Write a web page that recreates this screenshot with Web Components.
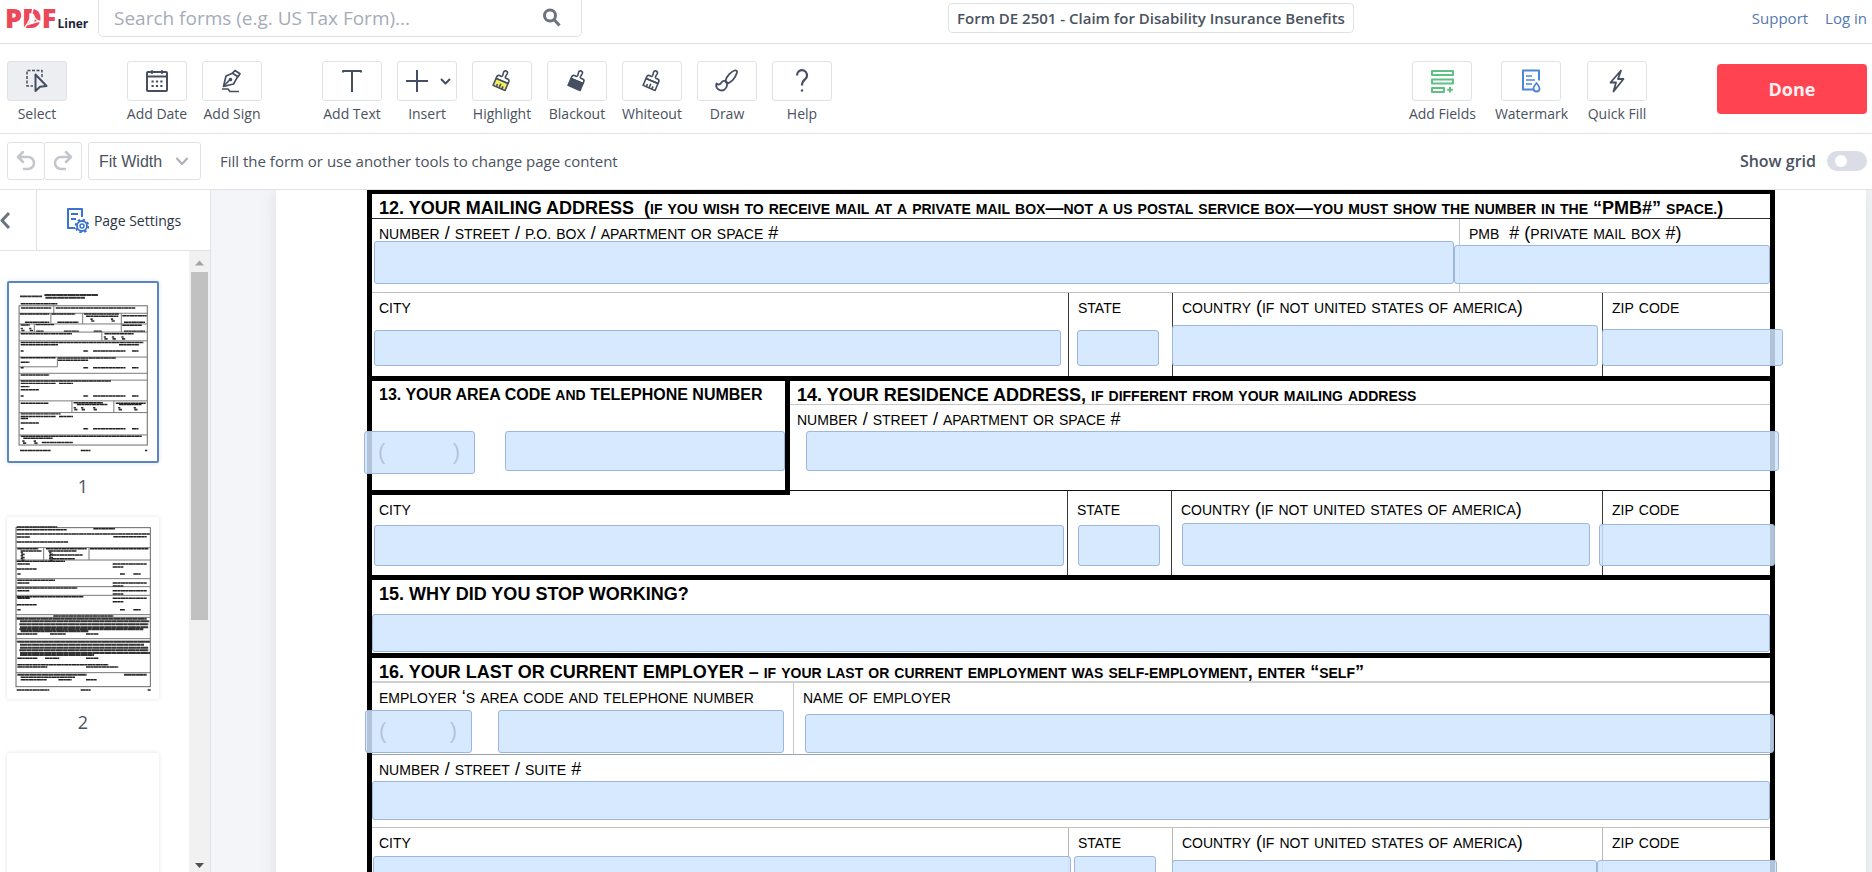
<!DOCTYPE html>
<html lang="en">
<head>
<meta charset="utf-8">
<title>Form DE 2501 - Claim for Disability Insurance Benefits</title>
<style>
    body {
        margin: 0;
        height: 100vh;
        overflow: hidden;
        display: flex;
        flex-direction: column;
        font-family: "Open Sans", "Noto Sans", sans-serif;
        font-size: 15px;
        color: #4a5260;
        background: #fff;
        --line: #dfe3e5;
        --blue: #5b87c0;
    }

    main {
        flex: 1;
        min-height: 0;
        display: flex;
    }
</style>
</head>
<body>
<app-header>Form DE 2501 - Claim for Disability Insurance Benefits</app-header>

<tool-bar>
    <tool-button icon="select" active>Select</tool-button>
    <tool-button icon="date" first>Add Date</tool-button>
    <tool-button icon="sign">Add Sign</tool-button>
    <tool-button icon="text" first>Add Text</tool-button>
    <tool-button icon="insert">Insert</tool-button>
    <tool-button icon="highlight">Highlight</tool-button>
    <tool-button icon="blackout">Blackout</tool-button>
    <tool-button icon="whiteout">Whiteout</tool-button>
    <tool-button icon="draw">Draw</tool-button>
    <tool-button icon="help">Help</tool-button>
    <tool-button slot="end" icon="fields" fit>Add Fields</tool-button>
    <tool-button slot="end" icon="watermark" fit>Watermark</tool-button>
    <tool-button slot="end" icon="quick" fit>Quick Fill</tool-button>
</tool-bar>

<option-bar>Fill the form or use another tools to change page content</option-bar>

<main>
    <side-panel>
        <page-thumb page="1" selected></page-thumb>
        <page-thumb page="2"></page-thumb>
        <page-thumb page="3"></page-thumb>
    </side-panel>

    <pdf-page>
        <form-row height="24" rule="#2e2e2e">
            <form-title>12. YOUR MAILING ADDRESS&nbsp; (<form-caps>IF YOU WISH TO RECEIVE MAIL AT A PRIVATE MAIL BOX—NOT A US POSTAL SERVICE BOX—YOU MUST SHOW THE NUMBER IN THE </form-caps>“PMB#”<form-caps> SPACE.)</form-caps></form-title>
        </form-row>
        <form-row columns="1087fr 311fr" height="73" rule="#c0c0c0" style="--divider: #c8c8c8; --bottom: 8px">
            <form-cell label="NUMBER / STREET / P.O. BOX / APARTMENT OR SPACE #" style="--field: 43px; --start: 2px; --end: 5px"></form-cell>
            <form-cell divided label="PMB&nbsp; # (PRIVATE MAIL BOX #)" style="--field: 39px; --start: -6px"></form-cell>
        </form-row>
        <form-row columns="696fr 104fr 430fr 168fr" height="83" rule="#000" thick style="--divider: #3a3a3a; --bottom: 10px">
            <form-cell label="CITY" style="--field: 36px; --start: 2px; --end: 7px"></form-cell>
            <form-cell divided label="STATE" style="--field: 36px; --start: 8px; --end: 13px"></form-cell>
            <form-cell divided label="COUNTRY (IF NOT UNITED STATES OF AMERICA)" style="--field: 41px; --start: -1px; --end: 4px"></form-cell>
            <form-cell divided label="ZIP CODE" style="--field: 37px; --start: -1px; --end: -13px"></form-cell>
        </form-row>

        <form-row columns="418fr 980fr" height="109" rule="#111">
            <phone-cell boxed style="--bottom: 16px; --code: 111px; --start: -8px; --gap: 30px">
                <form-title compact>13. YOUR AREA CODE <form-caps>AND</form-caps> TELEPHONE NUMBER</form-title>
            </phone-cell>
            <form-cell label="NUMBER / STREET / APARTMENT OR SPACE #" titled style="--field: 40px; --start: 16px; --end: -9px; --bottom: 19px">
                <form-title>14. YOUR RESIDENCE ADDRESS, <form-caps>IF DIFFERENT FROM YOUR MAILING ADDRESS</form-caps></form-title>
            </form-cell>
        </form-row>
        <form-row columns="695fr 104fr 431fr 168fr" height="84" rule="#000" thick style="--divider: #3a3a3a; --bottom: 9px; --top: 7px">
            <form-cell label="CITY" style="--field: 41px; --start: 2px; --end: 3px"></form-cell>
            <form-cell divided label="STATE" style="--field: 41px; --start: 10px; --end: 11px"></form-cell>
            <form-cell divided label="COUNTRY (IF NOT UNITED STATES OF AMERICA)" style="--field: 43px; --start: 10px; --end: 12px"></form-cell>
            <form-cell divided label="ZIP CODE" style="--field: 42px; --start: -4px; --end: -5px"></form-cell>
        </form-row>

        <form-row height="73" rule="#000" thick style="--bottom: 1px">
            <form-cell titled style="--field: 38px">
                <form-title>15. WHY DID YOU STOP WORKING?</form-title>
            </form-cell>
        </form-row>

        <form-row height="23" rule="#d0d0d0" double>
            <form-title>16. YOUR LAST OR CURRENT EMPLOYER – <form-caps>IF YOUR LAST OR CURRENT EMPLOYMENT WAS SELF-EMPLOYMENT, ENTER “SELF”</form-caps></form-title>
        </form-row>
        <form-row columns="421fr 977fr" height="71" rule="#9aa3ad" style="--divider: #c8c8c8; --bottom: 1px">
            <phone-cell label="EMPLOYER ‘S AREA CODE AND TELEPHONE NUMBER" style="--code: 107px; --start: -7px; --gap: 26px; --end: 9px"></phone-cell>
            <form-cell divided label="NAME OF EMPLOYER" style="--field: 39px; --start: 11px; --end: -4px"></form-cell>
        </form-row>
        <form-row height="72" rule="#c0c0c0" style="--bottom: 7px">
            <form-cell label="NUMBER / STREET / SUITE #" style="--field: 39px"></form-cell>
        </form-row>
        <form-row columns="696fr 104fr 430fr 168fr" height="84" rule="#000" thick style="--divider: #b8b8b8; --bottom: 15px">
            <form-cell label="CITY" style="--field: 41px; --start: 1px; --end: -3px"></form-cell>
            <form-cell divided label="STATE" style="--field: 41px; --start: 5px; --end: 16px"></form-cell>
            <form-cell divided label="COUNTRY (IF NOT UNITED STATES OF AMERICA)" style="--field: 37px; --start: -1px; --end: 5px"></form-cell>
            <form-cell divided label="ZIP CODE" style="--field: 37px; --start: -6px; --end: -7px"></form-cell>
        </form-row>
    </pdf-page>
</main>

<script>
const svg = (body, w = 24, h = 24) =>
    `<svg width="${w}" height="${h}" viewBox="0 0 ${w} ${h}" fill="none" stroke="#454f61" stroke-width="2" stroke-linejoin="round" aria-hidden="true">${body}</svg>`;

// paint brush, shared by Highlight, Blackout and Whiteout
const brush = (fill, ticks) => `
    <g transform="rotate(23 12 12)" stroke-width="1.6">
        <path d="M5.5 12V10a2 2 0 0 1 2-2h1.6q1.4 0 1.4-1.4L10 3.2a2 2 0 0 1 4 0L13.5 6.6q0 1.4 1.4 1.4h1.6a2 2 0 0 1 2 2v2z"/>
        <path d="M5.5 12h13v7.5h-13z" fill="${fill}"/>
        ${ticks ? `<path d="M9 19.5v-3M12 19.5v-4.5M15 19.5v-3"/>` : ""}
    </g>`;

const icons = {
    select: svg(`<path d="M17 8V1.5H2V17h6" stroke-width="1.5" stroke-dasharray="3 1.5"/><path d="M10.5 5.5v16.5l4.5-4.2 6.5-.8z" fill="#eceef1"/>`),
    date: svg(`<rect x="2" y="3" width="20" height="19" rx="1"/><path d="M2 7.5h20"/><path d="M7 1v4M17 1v4" stroke-width="1.5"/><path d="M6.5 12.5h11M6.5 17h11" stroke-width="2.2" stroke-dasharray="2.2 2.2"/>`),
    sign: svg(`<g stroke-width="1.7"><path d="M15 1.5l5 3.2-2 3-5.5-3.5z"/><path d="M12.5 4.2L6 7 3.5 17.5l10-2.5 4.2-7.3"/><path d="M3.5 17.5L10 10.5"/><circle cx="10.5" cy="10.5" r="1"/><path d="M2 20h6l2 2.5h9"/></g>`),
    text: svg(`<path d="M3 3.5V2h18v1.5M12 2v21"/>`),
    insert: svg(`<path d="M12 1v22M1 12h22"/><path d="M36 10l4.5 4.5L45 10"/>`, 48, 24),
    highlight: svg(brush("#f5ef5a", true)),
    blackout: svg(brush("#454f61", false)),
    whiteout: svg(brush("none", true)),
    draw: svg(`<g stroke-width="1.8"><path d="M10.5 11.5C12 7 16 2.5 19.5 1.5c2-.5 3 .7 2.3 2.5C20.5 8 17 12.5 13 14.5z"/><path d="M10 12a5.3 5.3 0 1 1-8.5 2.5c2 1.8 4 1 4.8-.8.7-1.2 2-2 3.7-1.7z"/></g>`),
    help: svg(`<path d="M7 6.5a5 5 0 1 1 8.5 3.3C13.5 11.5 12 12.5 12 16.5" stroke-width="2.2"/><circle cx="12" cy="21.5" r="1.2" fill="#454f61" stroke="none"/>`),
    fields: svg(`<g stroke="#5fc083"><path d="M2 2h21v4H2zM2 10.5h21v4H2zM2 19h12v4H2z"/><path d="M20 18v5.5M17.2 20.7h5.6"/></g>`),
    watermark: svg(`<g stroke="#4c86d8"><path d="M14 20.5H4v-19h16v10" /><path d="M7 7h6M7 11h9M7 15h6" stroke-width="1.6"/><path d="M17.5 14c2 2.5 3 4 3 5.5a3 3 0 0 1-6 0c0-1.5 1-3 3-5.5z" fill="#fff" stroke-width="1.8"/></g>`),
    quick: svg(`<path d="M16 1.5L5.5 13.5H11L8.5 22.5 18.5 10H13z" stroke-width="1.8"/>`)
};

// label letters are set smaller than the slashes, brackets and spaces between them
const smallCaps = text => text.replace(/[A-Z.-]+/g, "<small>$&</small>");

class AppHeader extends HTMLElement {
    connectedCallback() {
        this.attachShadow({ mode: "open" }).innerHTML = `
        <style>
            :host { display: block; }
            header {
                display: grid;
                grid-template-columns: auto 484px 367fr auto 399fr auto;
                align-items: start;
                height: 43px;
                padding: 0 5px;
                overflow: hidden;
                border-bottom: 1px solid var(--line);
            }
            .logo { display: flex; align-items: baseline; width: 93px; color: #1c2438; text-decoration: none; }
            .mark { position: relative; font-size: 27px; font-weight: 800; line-height: 36px; color: #ec4858; }
            .mark svg { position: absolute; left: 0; top: 0; }
            .name { margin-left: 1px; font-size: 12px; font-weight: 700; }
            form {
                display: flex;
                align-items: center;
                box-sizing: border-box;
                height: 46px;
                margin-top: -9px;
                padding: 8px 19px 0 15px;
                border: 1px solid var(--line);
                border-radius: 5px;
            }
            input { flex: 1; min-width: 0; padding: 0; border: 0; outline: 0; background: none; font: 19px "Open Sans", sans-serif; }
            input::placeholder { color: #a5acb8; }
            form button { display: flex; padding: 0; border: 0; background: none; }
            h1 {
                grid-column: 4;
                margin: 3px 0 0;
                padding: 0 8px;
                border: 1px solid var(--line);
                border-radius: 4px;
                font-size: 15px;
                font-weight: 600;
                line-height: 28px;
            }
            nav { grid-column: 6; display: flex; gap: 17px; line-height: 36px; }
            nav a { color: #5578b4; text-decoration: none; }
        </style>
        <header>
            <a class="logo" href="#"><span class="mark">PDF<svg width="54" height="36"><path d="M18 30C23 24 27 17 28 8M27 14q4 7 10 9M21 25q6-2 14-4" stroke="#fff" stroke-width="1.5" fill="none"/></svg></span><span class="name">Liner</span></a>
            <form>
                <input type="search" placeholder="Search forms (e.g. US Tax Form)..." aria-label="Search forms">
                <button type="button" aria-label="Search">${svg(`<g stroke="#6b7280" stroke-width="3"><circle cx="8" cy="7.5" r="5.5"/><path d="M12 11.5l5.5 6"/></g>`, 20, 20)}</button>
            </form>
            <h1><slot></slot></h1>
            <nav><a href="#">Support</a><a href="#">Log in</a></nav>
        </header>`;
    }
}
customElements.define("app-header", AppHeader);

class ToolButton extends HTMLElement {
    connectedCallback() {
        this.attachShadow({ mode: "open" }).innerHTML = `
        <style>
            :host { display: block; width: 60px; }
            :host([first]) { margin-left: 45px; }
            :host([fit]) { width: auto; }
            button {
                display: flex;
                flex-direction: column;
                align-items: center;
                gap: 3px;
                width: 100%;
                padding: 0;
                border: 0;
                background: none;
                font: 14px/20px "Open Sans", sans-serif;
                color: #4a5260;
                white-space: nowrap;
            }
            .box {
                display: flex;
                align-items: center;
                justify-content: center;
                box-sizing: border-box;
                width: 60px;
                height: 40px;
                border: 1px solid var(--line);
                border-radius: 3px;
            }
            :host([icon=insert]) .box { padding-left: 3px; }
            :host([active]) .box { background: #eceef1; }
        </style>
        <button type="button"><span class="box">${icons[this.getAttribute("icon")]}</span><slot></slot></button>`;
    }
}
customElements.define("tool-button", ToolButton);

class ToolBar extends HTMLElement {
    connectedCallback() {
        this.attachShadow({ mode: "open" }).innerHTML = `
        <style>
            :host {
                display: flex;
                justify-content: space-between;
                height: 72px;
                padding: 17px 5px 0 7px;
                border-bottom: 1px solid var(--line);
            }
            .tools { display: flex; gap: 15px; }
            .end { display: flex; gap: 19px; }
            .done {
                width: 150px;
                height: 50px;
                margin: 3px 0 0 51px;
                border: 0;
                border-radius: 4px;
                background: #ff4350;
                color: #fff0f1;
                font: 700 18px "Open Sans", sans-serif;
            }
        </style>
        <div class="tools"><slot></slot></div>
        <div class="end"><slot name="end"></slot><button class="done" type="button">Done</button></div>`;
    }
}
customElements.define("tool-bar", ToolBar);

class OptionBar extends HTMLElement {
    connectedCallback() {
        const arrow = `<g stroke="#c3c7cd" stroke-width="2.5" stroke-linecap="round"><path d="M7 1L2 6l5 5M3 6h9a5.5 5.5 0 0 1 0 12H8"/></g>`;
        this.attachShadow({ mode: "open" }).innerHTML = `
        <style>
            :host {
                display: flex;
                align-items: center;
                height: 54px;
                padding: 0 5px 1px 7px;
                border-bottom: 1px solid var(--line);
            }
            .history, .zoom {
                display: flex;
                align-items: center;
                justify-content: center;
                box-sizing: border-box;
                width: 38px;
                height: 38px;
                padding: 0;
                border: 1px solid var(--line);
                border-radius: 3px;
                background: #fff;
            }
            .redo { margin-left: -1px; }
            .redo svg { transform: scaleX(-1); }
            .zoom { width: 113px; margin: 0 19px 0 6px; padding: 0 11px 0 10px; }
            select {
                flex: 1;
                min-width: 0;
                padding: 0;
                border: 0;
                appearance: none;
                background: none;
                font: 16px "Liberation Sans", Arial, sans-serif;
                color: #4a5260;
            }
            p { flex: 1; margin: 0; }
            label { display: flex; align-items: center; gap: 11px; font-size: 16px; font-weight: 600; }
            input {
                display: flex;
                align-items: center;
                box-sizing: border-box;
                width: 40px;
                height: 20px;
                margin: 0;
                padding: 0 8px;
                appearance: none;
                border-radius: 10px;
                background: #dadde5;
            }
            input::before { content: ""; width: 12px; height: 12px; border-radius: 50%; background: #fff; }
        </style>
        <button class="history" type="button" aria-label="Undo">${svg(arrow, 20, 20)}</button>
        <button class="history redo" type="button" aria-label="Redo">${svg(arrow, 20, 20)}</button>
        <div class="zoom">
            <select aria-label="Zoom"><option>Fit Width</option></select>
            ${svg(`<path d="M1.5 2l5.5 6 5.5-6" stroke="#adb2b9" stroke-width="2.2"/>`, 14, 10)}
        </div>
        <p><slot></slot></p>
        <label>Show grid<input type="checkbox"></label>`;
    }
}
customElements.define("option-bar", OptionBar);

class SidePanel extends HTMLElement {
    connectedCallback() {
        this.attachShadow({ mode: "open" }).innerHTML = `
        <style>
            :host {
                display: flex;
                flex-direction: column;
                flex: none;
                width: 210px;
                border-right: 1px solid var(--line);
            }
            .head { display: flex; height: 60px; border-bottom: 1px solid var(--line); }
            button { display: flex; align-items: center; padding: 0; border: 0; background: none; }
            .fold { width: 37px; border-right: 1px solid var(--line); }
            .settings {
                flex: 1;
                justify-content: center;
                gap: 5px;
                color: #2c3445;
                font: 500 14px "Open Sans", sans-serif;
            }
            .body { flex: 1; min-height: 0; display: flex; }
            .pages {
                flex: 1;
                display: flex;
                flex-direction: column;
                gap: 19px;
                padding: 30px 30px 0 7px;
                overflow: hidden;
            }
            .scroll {
                display: flex;
                flex-direction: column;
                align-items: center;
                width: 21px;
                background: #f1f1f1;
            }
            .scroll svg { flex: none; }
            .grip { flex: 348; width: 17px; background: #c1c1c1; }
            .rest { flex: 235; }
        </style>
        <div class="head">
            <button class="fold" type="button" aria-label="Hide panel">${svg(`<path d="M9 2L2 9.5 9 17" stroke="#6b7280" stroke-width="3"/>`, 12, 19)}</button>
            <button class="settings" type="button">
                ${svg(`<g stroke="#3a73d2" stroke-width="2"><path d="M9 20H2V1h14v8M5 6h7M5 11h5"/><circle cx="16" cy="18" r="5" stroke-width="1.8"/><circle cx="16" cy="18" r="6.4" stroke-dasharray="2.5 2.5" stroke-width="1.8"/><circle cx="16" cy="18" r="2" stroke-width="1.5"/></g>`, 23, 25)}
                Page Settings
            </button>
        </div>
        <div class="body">
            <div class="pages"><slot></slot></div>
            <div class="scroll" aria-hidden="true">
                <svg width="21" height="21"><path d="M6 14.5h9l-4.5-5z" fill="#a3a3a3"/></svg>
                <div class="grip"></div>
                <div class="rest"></div>
                <svg width="21" height="17"><path d="M6 8h9l-4.5 5z" fill="#505050"/></svg>
            </div>
        </div>`;
    }
}
customElements.define("side-panel", SidePanel);

// miniature pages: frame, rules "x1 x2 y", uprights "x y1 y2", text "x1 x2 y", dense text and tick boxes "x y"
const minis = {
    1: {
        box: "21 273 456 546",
        frame: [52, 342, 395, 429],
        rules: "52 447 365,52 447 398,52 447 423,52 447 450,52 447 500,52 170 530,52 447 550,52 447 571,52 447 635,52 447 671,52 447 740",
        uprights: "159 342 365,150 365 398,248 365 398,367 365 423,99 398 423,307 423 450,170 500 530,215 635 671,344 635 671",
        text: "57 170 336,58 152 349,165 410 349,55 145 367,152 225 367,252 360 367,370 445 373,258 358 374,70 145 393,170 235 393,375 440 393,57 85 401,103 160 400,370 430 402,105 128 420,190 237 420,282 308 420,375 440 420,57 215 428,315 405 428,57 435 455,57 172 462,360 422 462,57 66 481,250 265 481,280 380 481,400 420 481,57 165 502,172 350 503,172 265 510,57 84 516,57 66 533,250 265 533,280 380 533,400 420 533,57 145 555,57 335 574,57 165 581,175 218 581,57 84 591,57 113 601,57 66 620,250 265 620,280 380 620,400 420 620,57 143 642,220 310 641,230 325 646,350 442 642,360 430 646,57 180 675,57 165 683,175 218 683,57 80 689,57 113 703,57 66 721,250 265 721,280 380 721,400 420 721,57 430 744,65 155 750,122 218 763,55 150 788,242 272 788,440 447 788",
        heavy: "55 123 313,130 295 309,133 255 317",
        ticks: "277 386,340 386,62 415,88 415,318 441,343 441,372 441,225 659,248 659,285 659,362 659,410 659,67 762,102 762"
    },
    2: {
        box: "21 53 456 546",
        frame: [48, 85, 403, 477],
        rules: "48 451 145,48 451 182,48 451 238,48 451 262,48 451 288,48 451 346,48 451 354,48 451 418,48 451 426,48 451 520",
        uprights: "131 145 182,267 145 182",
        text: "50 172 83,50 200 91,280 345 88,50 450 104,340 440 112,50 90 113,50 205 128,52 115 148,138 260 148,270 445 148,62 125 155,145 230 155,155 248 167,155 225 178,50 195 186,52 90 194,338 440 194,338 370 203,50 110 209,52 62 224,360 375 224,400 422 224,52 165 243,52 88 251,338 440 251,338 370 260,50 232 266,52 88 274,338 440 274,338 370 284,50 250 292,52 90 297,338 440 297,338 370 307,50 110 316,52 62 331,360 375 331,400 422 331,160 340 350,52 112 404,150 198 404,258 295 404,52 112 477,135 178 477,258 295 477,52 325 496,52 142 503,258 355 503,62 225 534,62 140 541,175 215 541,258 290 541,50 148 572,242 272 572,443 452 572",
        heavy: "50 440 358,60 448 366,58 445 375,60 445 384,58 430 390,62 265 396,52 450 427,60 432 436,60 445 445,58 445 453,60 450 461,60 282 467,52 260 526,372 440 526",
        ticks: "67 162,67 172,67 180,152 162,152 172,152 180"
    }
};

class PageThumb extends HTMLElement {
    connectedCallback() {
        const page = this.getAttribute("page");
        const mini = minis[page];
        // a page that is still to be rendered shows an empty sheet
        this.attachShadow({ mode: "open" }).innerHTML = `
        <style>
            :host { display: block; }
            figure { margin: 0; }
            .sheet {
                display: block;
                box-sizing: border-box;
                width: 100%;
                height: 182px;
                padding: 0;
                border: 0;
                border-radius: 2px;
                background: #fff;
                box-shadow: 0 0 4px rgba(60, 70, 110, .15);
                overflow: hidden;
            }
            :host([selected]) .sheet { border: 2px solid var(--blue); }
            svg { display: block; width: 100%; height: 100%; }
            figcaption { margin-top: 11px; font-size: 18px; line-height: 24px; text-align: center; }
        </style>
        <figure>
            <button class="sheet" type="button" aria-label="Page ${page}">${mini ? this.draw(mini) : ""}</button>
            ${mini ? `<figcaption>${page}</figcaption>` : ""}
        </figure>`;
    }
    draw(mini) {
        const across = list => list.split(",").map(l => l.split(" ")).map(([a, b, y]) => `M${a} ${y}H${b}`).join("");
        const down = list => list.split(",").map(l => l.split(" ")).map(([x, a, b]) => `M${x} ${a}V${b}`).join("");
        const ticks = mini.ticks.split(",").map(l => l.split(" ")).map(([x, y]) => `M${x - 5} ${y - 3}h7M${x - 3} ${+y + 3}h10`).join("");
        const [x, y, w, h] = mini.frame;
        return `<svg viewBox="${mini.box}" fill="none" stroke="#333" aria-hidden="true">
            <rect x="${x}" y="${y}" width="${w}" height="${h}" stroke="#666" stroke-width="3"/>
            <path d="${across(mini.rules)}${down(mini.uprights)}" stroke="#777" stroke-width="3"/>
            <path d="${across(mini.text)}" stroke="#222" stroke-width="4.5" stroke-dasharray="14 .6 8 .8"/>
            <path d="${across(mini.heavy)}" stroke-width="6" stroke-dasharray="22 .5 13 .7"/>
            <path d="${ticks}" stroke-width="5"/>
        </svg>`;
    }
}
customElements.define("page-thumb", PageThumb);

class PdfPage extends HTMLElement {
    connectedCallback() {
        this.attachShadow({ mode: "open" }).innerHTML = `
        <style>
            :host {
                flex: 1;
                min-width: 0;
                padding: 0 6px 0 65px;
                overflow: hidden;
                background: #f4f5f8;
            }
            .paper {
                padding: 0 91px;
                background: #fff;
                box-shadow: 0 0 18px rgba(60, 70, 110, .12);
                color: #000;
                font-family: "Liberation Sans", Arial, sans-serif;
            }
            .form { border: 5px solid #000; border-top-width: 4px; }
        </style>
        <div class="paper"><div class="form"><slot></slot></div></div>`;
    }
}
customElements.define("pdf-page", PdfPage);

class FormRow extends HTMLElement {
    connectedCallback() {
        const columns = this.getAttribute("columns") || "1fr";
        this.attachShadow({ mode: "open" }).innerHTML = `
        <style>
            :host {
                display: grid;
                grid-template-columns: ${columns};
                grid-template-rows: minmax(0, 1fr);
                height: ${this.getAttribute("height")}px;
                border-bottom: 1px solid ${this.getAttribute("rule")};
            }
            :host([thick]) { border-bottom-width: 5px; }
            :host([double]) { border-bottom-width: 2px; }
        </style>
        <slot></slot>`;
    }
}
customElements.define("form-row", FormRow);

class FormTitle extends HTMLElement {
    connectedCallback() {
        this.attachShadow({ mode: "open" }).innerHTML = `
        <style>
            :host {
                display: block;
                box-sizing: border-box;
                height: 23px;
                padding: 3px 0 0 7px;
                font-size: 18px;
                font-weight: 700;
                line-height: 22px;
                white-space: nowrap;
            }
            :host([compact]) { font-size: 16px; }
        </style>
        <slot></slot>`;
    }
}
customElements.define("form-title", FormTitle);

class FormCaps extends HTMLElement {
    connectedCallback() {
        // spaces at either end are kept, so the markup holds none of its own
        this.attachShadow({ mode: "open" }).innerHTML =
            `<style>:host { display: inline; white-space: pre; } small { font-size: 14px; line-height: 0; }</style>${smallCaps(this.textContent)}`;
    }
}
customElements.define("form-caps", FormCaps);

const fieldStyles = `
    :host {
        display: flex;
        flex-direction: column;
        box-sizing: border-box;
        min-width: 0;
        padding: var(--top, 3px) 0 var(--bottom);
    }
    label {
        min-height: 0;
        padding-left: 7px;
        font-size: 18px;
        line-height: 22px;
        white-space: nowrap;
    }
    small { font-size: 14px; line-height: 0; }
    input {
        flex: none;
        box-sizing: border-box;
        min-width: 0;
        height: var(--field);
        margin: auto var(--end, 0px) 0 var(--start, 0px);
        padding: 0 6px;
        border: 1px solid #9cb7dc;
        border-radius: 3px;
        outline: 0;
        background: rgba(208, 229, 255, .85);
        position: relative;
        font: 16px "Liberation Sans", Arial, sans-serif;
    }
`;

class FormCell extends HTMLElement {
    connectedCallback() {
        const label = this.getAttribute("label");
        const titled = this.hasAttribute("titled");
        this.attachShadow({ mode: "open" }).innerHTML = `
        <style>
            ${fieldStyles}
            :host([divided]) { border-left: 1px solid var(--divider); }
            :host([divided]) label { padding-left: 9px; }
            :host([titled]) { padding-top: 0; }
            .title { padding: 0; }
            .sub { padding-top: 3px; border-top: 1px solid #c8c8c8; }
        </style>
        ${titled ? `<label class="title" for="field"><slot></slot></label>` : ""}
        ${label ? `<label ${titled ? `class="sub"` : ""} for="field">${smallCaps(label)}</label>` : ""}
        <input id="field" type="text">`;
    }
}
customElements.define("form-cell", FormCell);

class PhoneCell extends HTMLElement {
    connectedCallback() {
        this.attachShadow({ mode: "open" }).innerHTML = `
        <style>
            ${fieldStyles}
            :host([boxed]) {
                height: 114px;
                padding-top: 0;
                border: solid #000;
                border-width: 0 5px 5px 0;
            }
            :host([boxed]) label { padding: 0; }
            .numbers {
                display: grid;
                grid-template-columns: var(--code) 1fr;
                gap: var(--gap);
                margin: auto var(--end, 0px) 0 var(--start);
            }
            .code { display: grid; }
            .code > * { grid-area: 1 / 1; }
            .brackets {
                display: flex;
                justify-content: space-between;
                padding: 8px 15px 0 14px;
                font-size: 22px;
                line-height: 26px;
            }
            input { margin: 0; height: 43px; }
            :host([boxed]) .phone { height: 40px; }
        </style>
        <label for="phone"><slot></slot>${smallCaps(this.getAttribute("label") || "")}</label>
        <div class="numbers">
            <div class="code">
                <span class="brackets"><span>(</span><span>)</span></span>
                <input type="tel" aria-label="Area code">
            </div>
            <input class="phone" id="phone" type="tel">
        </div>`;
    }
}
customElements.define("phone-cell", PhoneCell);
</script>
</body>
</html>
